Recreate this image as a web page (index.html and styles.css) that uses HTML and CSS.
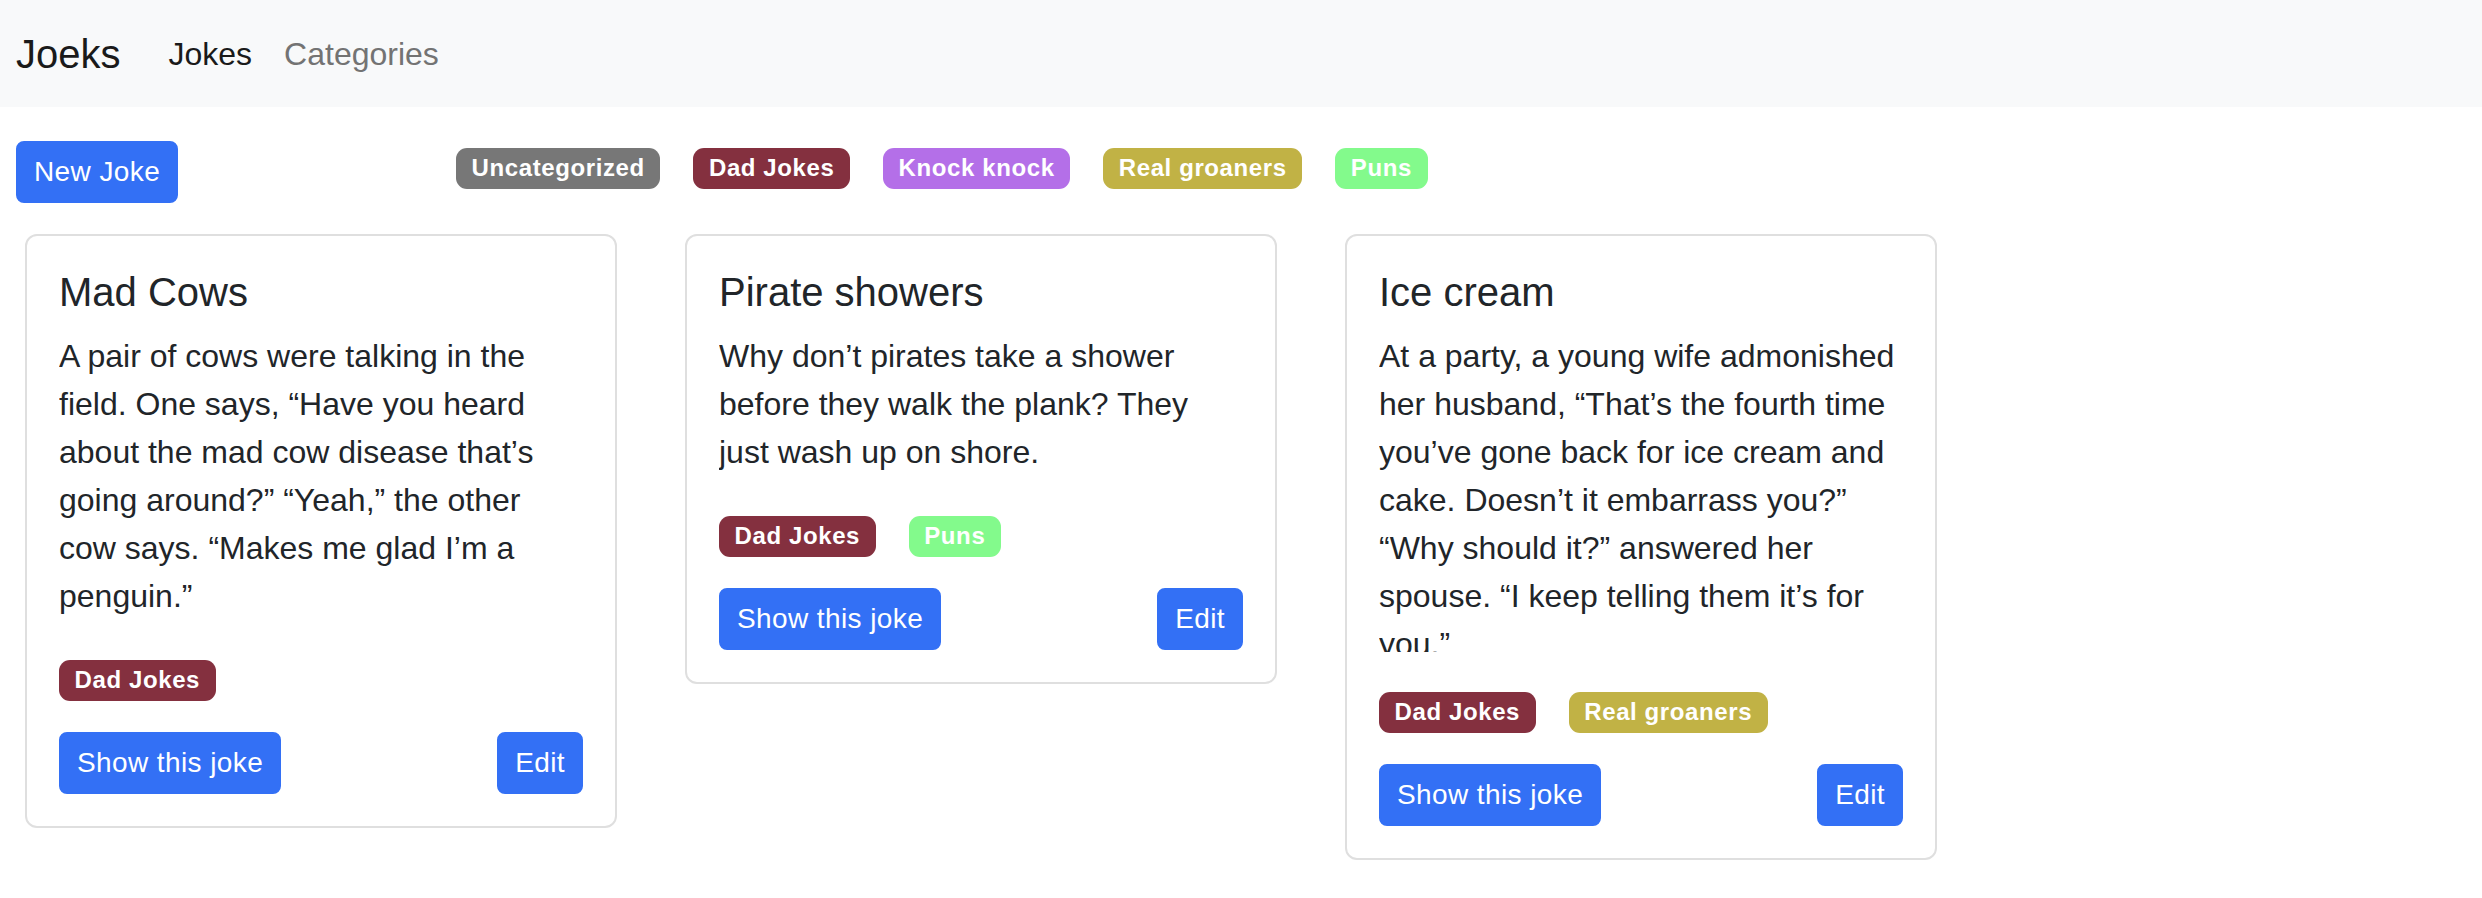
FILE: index.html
```html
<!DOCTYPE html>
<html lang="en">
<head>
<meta charset="utf-8">
<title>Joeks</title>
<link rel="stylesheet" href="styles.css">
</head>
<body>
<nav class="navbar">
  <a class="brand" href="#">Joeks</a>
  <ul class="nav">
    <li><a class="nav-link active" href="#">Jokes</a></li>
    <li><a class="nav-link" href="#">Categories</a></li>
  </ul>
</nav>
<main class="main">
  <div class="toolbar">
    <div class="toolbar-action"><a class="btn" href="#">New Joke</a></div>
    <div class="tags tags-top">
      <span class="badge b-uncat">Uncategorized</span>
      <span class="badge b-dad">Dad Jokes</span>
      <span class="badge b-knock">Knock knock</span>
      <span class="badge b-groan">Real groaners</span>
      <span class="badge b-puns">Puns</span>
    </div>
  </div>
  <div class="cards">
    <div class="card">
      <h5 class="card-title">Mad Cows</h5>
      <p class="card-text">A pair of cows were talking in the field. One says, “Have you heard about the mad cow disease that’s going around?” “Yeah,” the other cow says. “Makes me glad I’m a penguin.”</p>
      <div class="tags"><span class="badge b-dad">Dad Jokes</span></div>
      <div class="actions"><a class="btn" href="#">Show this joke</a><a class="btn" href="#">Edit</a></div>
    </div>
    <div class="card">
      <h5 class="card-title">Pirate showers</h5>
      <p class="card-text">Why don’t pirates take a shower before they walk the plank? They just wash up on shore.</p>
      <div class="tags"><span class="badge b-dad">Dad Jokes</span><span class="badge b-puns">Puns</span></div>
      <div class="actions"><a class="btn" href="#">Show this joke</a><a class="btn" href="#">Edit</a></div>
    </div>
    <div class="card">
      <h5 class="card-title">Ice cream</h5>
      <p class="card-text">At a party, a young wife admonished her husband, “That’s the fourth time you’ve gone back for ice cream and cake. Doesn’t it embarrass you?” “Why should it?” answered her spouse. “I keep telling them it’s for you.”</p>
      <div class="tags"><span class="badge b-dad">Dad Jokes</span><span class="badge b-groan">Real groaners</span></div>
      <div class="actions"><a class="btn" href="#">Show this joke</a><a class="btn" href="#">Edit</a></div>
    </div>
  </div>
</main>
</body>
</html>
```

FILE: styles.css
```css
* { box-sizing: border-box; }
body {
  margin: 0;
  font-family: "Liberation Sans", Arial, sans-serif;
  color: #212529;
  background: #fff;
}
a { text-decoration: none; }

.navbar {
  height: 107px;
  background: #f8f9fa;
  display: flex;
  align-items: center;
  padding: 0 16px;
}
.brand {
  font-size: 40px;
  line-height: 60px;
  color: #1a1a1a;
  margin-right: 32px;
}
.nav {
  display: flex;
  list-style: none;
  margin: 0;
  padding: 0;
}
.nav-link {
  display: block;
  font-size: 32px;
  line-height: 48px;
  padding: 0 16px;
  color: #737373;
}
.nav-link.active { color: #1a1a1a; }

.main { padding: 34px 0 40px; }

.toolbar {
  display: grid;
  grid-template-columns: 440px 1fr;
  padding-left: 16px;
  align-items: start;
}
.tags-top { margin-top: 7px; }

.btn {
  display: inline-block;
  font-size: 28px;
  line-height: 42px;
  letter-spacing: 0.4px;
  padding: 8px 16px;
  border: 2px solid #3370f5;
  border-radius: 8px;
  background: #3370f5;
  color: #fff;
}

.tags {
  display: flex;
  gap: 33px;
}
.badge {
  display: inline-block;
  font-size: 24px;
  line-height: 1;
  font-weight: 700;
  letter-spacing: 0.6px;
  padding: 8.4px 15.6px;
  border-radius: 11px;
  color: #fff;
}
.b-uncat { background: #777777; }
.b-dad { background: #84303f; }
.b-knock { background: #b46fe8; }
.b-groan { background: #c1b245; }
.b-puns { background: #83fa8c; }

.cards {
  display: flex;
  align-items: flex-start;
  gap: 68px;
  margin-top: 31px;
  padding-left: 25px;
}
.card {
  width: 592px;
  border: 2px solid #dfdfdf;
  border-radius: 12px;
  padding: 32px;
}
.card-title {
  margin: 0 0 16px;
  font-size: 40px;
  line-height: 48px;
  font-weight: 500;
  color: #212529;
}
.card-text {
  margin: 0;
  font-size: 32px;
  line-height: 48px;
  max-height: 320px;
  overflow: hidden;
}
.card .tags { margin-top: 40px; }
.actions {
  display: flex;
  justify-content: space-between;
  margin-top: 31px;
}
```
